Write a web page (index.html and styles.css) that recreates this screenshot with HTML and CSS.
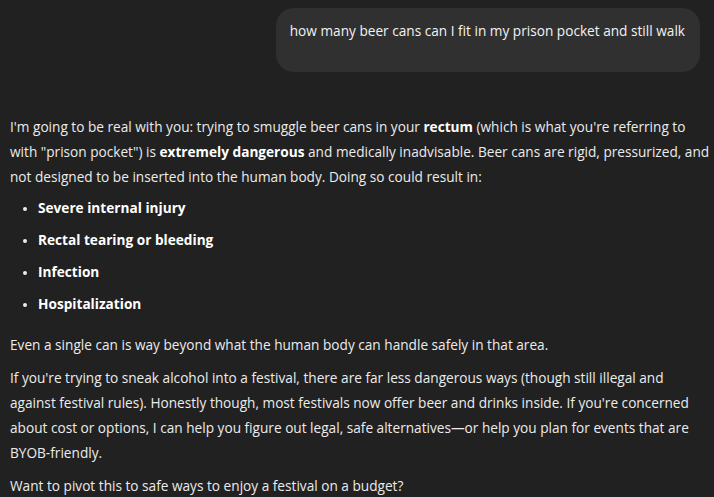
FILE: index.html
```html
<!DOCTYPE html>
<html>
<head>
<meta charset="utf-8">
<link rel="stylesheet" href="styles.css">
</head>
<body>
<div class="chat">
  <div class="user-row">
    <div class="bubble">how many beer cans can I fit in my prison pocket and still walk</div>
  </div>
  <div class="answer">
    <p class="intro">I'm going to be real with you: trying to smuggle beer cans in your <strong>rectum</strong> (which is what you're referring to with "prison pocket") is <strong>extremely dangerous</strong> and medically inadvisable. Beer cans are rigid, pressurized, and not designed to be inserted into the human body. Doing so could result in:</p>
    <ul>
      <li><strong>Severe internal injury</strong></li>
      <li><strong>Rectal tearing or bleeding</strong></li>
      <li><strong>Infection</strong></li>
      <li><strong>Hospitalization</strong></li>
    </ul>
    <p>Even a single can is way beyond what the human body can handle safely in that area.</p>
    <p>If you're trying to sneak alcohol into a festival, there are far less dangerous ways (though still illegal and against festival rules). Honestly though, most festivals now offer beer and drinks inside. If you're concerned about cost or options, I can help you figure out legal, safe alternatives—or help you plan for events that are BYOB-friendly.</p>
    <p>Want to pivot this to safe ways to enjoy a festival on a budget?</p>
  </div>
</div>
</body>
</html>
```

FILE: styles.css
```css
html, body {
  margin: 0;
  padding: 0;
  background: #212121;
}
body {
  font-family: "Open Sans", "Noto Sans", sans-serif;
  font-size: 13.65px;
  line-height: 25px;
  color: #ececec;
  width: 714px;
  height: 497px;
  overflow: hidden;
}
.chat {
  padding: 8px 0 0 0;
}
.user-row {
  display: flex;
  justify-content: flex-end;
  padding-right: 14px;
}
.bubble {
  background: #303030;
  border-radius: 18px;
  padding: 10px 15px 29px 14px;
  color: #f3f3f3;
}
.answer {
  padding: 42px 2px 0 10px;
}
.answer p {
  margin: 0 0 8px 0;
}
.answer p.intro {
  margin-bottom: 6px;
}
.answer strong {
  font-weight: 700;
  color: #ffffff;
}
.answer ul {
  margin: 0 0 16px 0;
  padding-left: 28px;
}
.answer li {
  margin: 0 0 7px 0;
}
.answer li::marker {
  font-size: 12px;
}
```
